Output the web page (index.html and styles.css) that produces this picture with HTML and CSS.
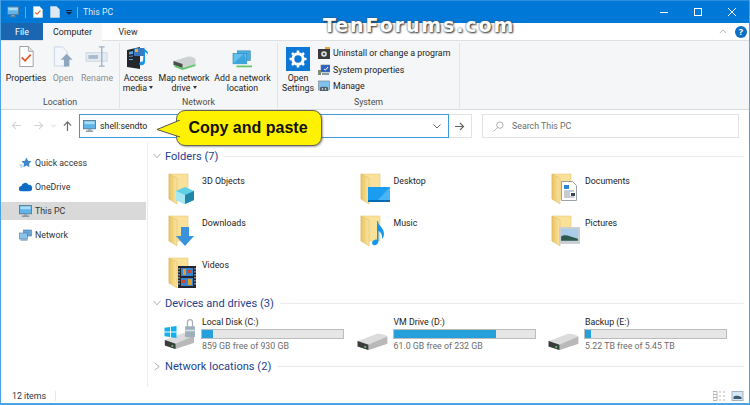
FILE: index.html
```html
<!DOCTYPE html>
<html lang="en">
<head>
<meta charset="utf-8">
<title>This PC</title>
<link rel="stylesheet" href="styles.css">
</head>
<body>
<svg class="defs" width="0" height="0" aria-hidden="true">
  <defs>
    <linearGradient id="fold" x1="0" y1="0" x2="1" y2="0"><stop offset="0" stop-color="#e9c260"/><stop offset="1" stop-color="#fbe6a2"/></linearGradient>
    <symbol id="folder" viewBox="0 0 32 32">
      <path d="M1 1h19v25H1z" fill="#fae19a" stroke="#e6c97e" stroke-width=".6"/>
      <path d="M1 1l8 4v26l-8-5z" fill="url(#fold)" stroke="#d9b760" stroke-width=".5"/>
    </symbol>
    <symbol id="pc" viewBox="0 0 14 13">
      <rect x=".5" y=".5" width="13" height="9" fill="#5fb5ea" stroke="#5a7d96"/>
      <rect x="1.5" y="1.5" width="11" height="3" fill="#a9dcf7"/>
      <rect x="5" y="10" width="4" height="1.5" fill="#8aa0ae"/>
      <rect x="3" y="11.5" width="8" height="1.2" fill="#6a8192"/>
    </symbol>
    <symbol id="hdd" viewBox="0 0 34 20">
      <path d="M1 9L22 1c4-.5 9 .5 12 3v8L13 19 1 15z" fill="#dcdcdc"/>
      <path d="M1 9l12 4 21-9v8L13 19 1 15z" fill="#b9b9b9"/>
      <path d="M1 9l12 4v6L1 15z" fill="#3b3b3b"/>
      <rect x="8.500" y="14.500" width="2" height="2" fill="#5fd06a"/>
    </symbol>
    <symbol id="sm-hdd" viewBox="0 0 24 16">
      <path d="M1 7L14 3c4-1 7 0 9 2v5l-13 4L1 11z" fill="#cfd2d2"/>
      <path d="M1 7l9 3v4l-9-3z" fill="#4d4d4d"/>
      <path d="M2 11l8 3 13-4v2l-13 4-8-3z" fill="#63c66a"/>
    </symbol>
  </defs>
</svg>

<div class="window">
  <header class="titlebar">
    <svg class="ti ti-pc"><use href="#pc"/></svg>
    <span class="tsep"></span>
    <svg class="ti ti-doc" viewBox="0 0 10 12"><path d="M.5.5h6l3 3v8h-9z" fill="#fff" stroke="#c9d6e2" stroke-width=".6"/><path d="M2.2 6.4l1.8 1.8 3.4-3.6" fill="none" stroke="#e8692c" stroke-width="1.2"/></svg>
    <svg class="ti ti-doc2" viewBox="0 0 10 12"><path d="M.5.5h6l3 3v8h-9z" fill="#dce9f5" stroke="#c2d6ea" stroke-width=".6"/></svg>
    <svg class="ti ti-drop" viewBox="0 0 6 6"><path d="M0 0h6v1H0zM0 2h6L3 5z" fill="#10253a"/></svg>
    <span class="tsep tsep2"></span>
    <span class="ttext">This PC</span>
    <span class="winbtns">
      <svg viewBox="0 0 10 10"><path d="M1 5.5h8" stroke="#fff" fill="none"/></svg>
      <svg viewBox="0 0 10 10"><rect x="1.5" y="1.5" width="7" height="7" stroke="#fff" fill="none"/></svg>
      <svg viewBox="0 0 10 10"><path d="M1 1l8 8M9 1l-8 8" stroke="#fff" fill="none"/></svg>
    </span>
  </header>
  <div class="watermark">TenForums.com</div>

  <nav class="tabs">
    <span class="tab tab-file">File</span>
    <span class="tab tab-active">Computer</span>
    <span class="tab tab-view">View</span>
    <span class="tabs-right">
      <svg class="chev" viewBox="0 0 10 6"><path d="M1 5l4-4 4 4" fill="none" stroke="#a6a6a6"/></svg>
      <span class="help">?</span>
    </span>
  </nav>

  <section class="ribbon">
    <div class="group g-location">
      <div class="group-body">
        <div class="rbtn w-prop">
          <svg class="ric" viewBox="0 0 20 22"><path d="M3.5.5h9l5 5v16h-14z" fill="#fff" stroke="#9d9d9d"/><path d="M12.5.5v5h5" fill="#e9e9e9" stroke="#9d9d9d"/><path d="M5.5 12l3.5 3.5 6-6.5" fill="none" stroke="#e4572a" stroke-width="1.8"/></svg>
          <span>Properties</span>
        </div>
        <div class="rbtn w-open dim">
          <svg class="ric" viewBox="0 0 22 22"><path d="M1.500.5h9l5 5v16h-14z" fill="#f3f7fb" stroke="#c4d3e2"/><path d="M15 8l6.500 6.500H18V22h-6v-7.500H8.500z" fill="#8fa6bd"/></svg>
          <span>Open</span>
        </div>
        <div class="rbtn w-rename dim">
          <svg class="ric ric-wide" viewBox="0 0 24 22"><rect x=".5" y="7" width="22" height="9" fill="#e4ecf3" stroke="#cdd8e2"/><rect x="3" y="9.500" width="10" height="4" fill="#a9bccd"/><path d="M14 1h6M17 1v20M14 21h6" fill="none" stroke="#9fb1c2" stroke-width="1.4"/></svg>
          <span>Rename</span>
        </div>
      </div>
      <div class="group-label">Location</div>
    </div>

    <div class="group g-network">
      <div class="group-body">
        <div class="rbtn w-access">
          <svg class="ric ric-media" viewBox="0 0 24 24"><path d="M1 4l13-3v22l-13-2z" fill="#23272c"/><path d="M3 6l4-1v3l-4 .6zM3 10l4-.6v1l-4 .4zM3 13h4v1H3z" fill="#5aa7e0"/><rect x="8" y="2" width="10" height="8" fill="#3b78c0"/><path d="M9 3h3v3H9z" fill="#e2b53f"/><path d="M18 1c.5 4 5 3 4 8-.5-2-2-2.500-3-3v10c0 2.500-3 4-5 3s0-4 3-3.500z" fill="#1596e8"/></svg>
          <span>Access<br>media <i class="caret"></i></span>
        </div>
        <div class="rbtn w-map">
          <svg class="ric ric-map" viewBox="0 0 24 16"><use href="#sm-hdd"/></svg>
          <span>Map network<br>drive <i class="caret"></i></span>
        </div>
        <div class="rbtn w-add">
          <svg class="ric ric-add" viewBox="0 0 24 22"><rect x="6" y="1" width="15" height="11" fill="#49b0e6" stroke="#2d7fae" stroke-width=".7"/><rect x="1" y="4" width="16" height="12" fill="#63c1ee" stroke="#2d7fae" stroke-width=".7"/><path d="M1 16h16l-3-12z" fill="#3da5dd"/><path d="M5 18h18v2H5z" fill="#62c566"/></svg>
          <span>Add a network<br>location</span>
        </div>
      </div>
      <div class="group-label">Network</div>
    </div>

    <div class="group g-system">
      <div class="group-body">
        <div class="rbtn w-settings">
          <svg class="ric ric-gear" viewBox="0 0 24 24"><rect width="24" height="24" fill="#0a78d4"/><circle cx="12" cy="12" r="5.200" fill="none" stroke="#fff" stroke-width="3"/><path d="M12 3.500v3M12 17.500v3M3.500 12h3M17.500 12h3M6 6l2.200 2.200M15.800 15.800L18 18M18 6l-2.200 2.200M8.200 15.800L6 18" stroke="#fff" stroke-width="2.600"/></svg>
          <span>Open<br>Settings</span>
        </div>
        <ul class="syslist">
          <li><svg viewBox="0 0 12 12"><rect y="2" width="12" height="10" fill="#3a3a3a"/><circle cx="6" cy="7" r="2.800" fill="#e8e8e8"/><circle cx="6" cy="7" r="1.300" fill="#555"/><path d="M7 0h5v2H7z" fill="#e8a33d"/></svg>Uninstall or change a program</li>
          <li><svg viewBox="0 0 12 12"><rect x="3" y="1" width="9" height="7" fill="#2f5fc0" stroke="#6a7a8a" stroke-width=".6"/><path d="M6 5l1.500 1L10 3" stroke="#fff" fill="none"/><rect x="0" y="6" width="3" height="5" fill="#7c8c74"/><rect x="4" y="9" width="7" height="2" fill="#8a9aa6"/></svg>System properties</li>
          <li><svg viewBox="0 0 12 12"><rect x=".5" y="1" width="11" height="9" fill="#7ec3ee" stroke="#7d8c98" stroke-width=".7"/><path d="M2 11V7.500c0-1 8-1 8 0V11z" fill="#555f68"/><circle cx="4.500" cy="9" r=".8" fill="#fff"/><circle cx="7.500" cy="9" r=".8" fill="#fff"/></svg>Manage</li>
        </ul>
      </div>
      <div class="group-label">System</div>
    </div>
  </section>

  <div class="addressbar">
    <svg class="nav nav-back" viewBox="0 0 12 10"><path d="M11 5H1.500M5.500 1l-4 4 4 4" fill="none" stroke="#cfd3d6" stroke-width="1.200"/></svg>
    <svg class="nav nav-fwd" viewBox="0 0 12 10"><path d="M1 5h9.500M6.500 1l4 4-4 4" fill="none" stroke="#cfd3d6" stroke-width="1.200"/></svg>
    <svg class="nav nav-down" viewBox="0 0 6 4"><path d="M.5.500L3 3 5.500.5" fill="none" stroke="#c9ccce"/></svg>
    <svg class="nav nav-up" viewBox="0 0 10 11"><path d="M5 11V1.500M1 5l4-4 4 4" fill="none" stroke="#6a6a6a" stroke-width="1.300"/></svg>
    <div class="addr">
      <svg class="addr-pc"><use href="#pc"/></svg>
      <span class="addr-text">shell:sendto</span>
      <svg class="addr-chev" viewBox="0 0 8 5"><path d="M.5.500L4 4 7.500.5" fill="none" stroke="#666"/></svg>
    </div>
    <div class="go"><svg viewBox="0 0 10 9"><path d="M0 4.500h8.500M5 1l3.500 3.500L5 8" fill="none" stroke="#666" stroke-width="1.200"/></svg></div>
    <div class="search">
      <svg viewBox="0 0 12 12"><circle cx="7.500" cy="4.500" r="3.500" fill="none" stroke="#a8a8a8"/><path d="M5 7L1 11" stroke="#a8a8a8"/></svg>
      <span>Search This PC</span>
    </div>
  </div>

  <div class="callout">
    <svg class="callout-tail" viewBox="0 0 24 18"><path d="M24 0L1 9.500 24 17" fill="#fff200" stroke="#55554a" stroke-linejoin="round"/></svg>
    <span class="callout-body">Copy and paste</span>
  </div>

  <main class="main">
    <aside class="side">
      <div class="side-item"><svg viewBox="0 0 12 12"><path d="M7 .5l1.600 3.300 3.400.5-2.500 2.400.6 3.500L7 8.600 3.900 10.200l.6-3.500L2 4.300l3.400-.5z" fill="#3f87c9"/><path d="M0 8h3M1 10h2" stroke="#7fb1dc"/></svg>Quick access</div>
      <div class="side-item"><svg viewBox="0 0 12 8"><path d="M2.500 8a2.500 2.500 0 0 1-.3-5A3.500 3.500 0 0 1 8.700 2 3 3 0 0 1 9.500 8z" fill="#0f6cc4"/></svg>OneDrive</div>
      <div class="side-item sel"><svg><use href="#pc"/></svg>This PC</div>
      <div class="side-item"><svg viewBox="0 0 12 12"><rect x="4" y="1" width="8" height="6" fill="#6aa6d6" stroke="#4a7aa8" stroke-width=".6"/><rect x="0" y="4" width="8" height="6" fill="#8cc3ea" stroke="#4a7aa8" stroke-width=".6"/><path d="M1 11h7" stroke="#5b7f9f"/></svg>Network</div>
    </aside>

    <div class="content">
      <div class="sec-head"><svg viewBox="0 0 9 6"><path d="M.5.500L4.500 5 8.500.5" fill="none" stroke="#8a8a8a" stroke-width=".8"/></svg><span>Folders (7)</span><i></i></div>
      <div class="grid folders">
        <div class="fitem"><span class="fic"><svg class="f"><use href="#folder"/></svg><svg class="o" viewBox="0 0 20 20"><path d="M10 2l9 4v9l-9 4-9-4V6z" fill="#5ed0e6"/><path d="M10 10v9l-9-4V6z" fill="#a5e8f3"/><path d="M10 10v9l9-4V6z" fill="#1f86a8"/></svg></span>3D Objects</div>
        <div class="fitem"><span class="fic"><svg class="f"><use href="#folder"/></svg><svg class="o o-desk" viewBox="0 0 22 15"><rect width="22" height="15" fill="#1a9cf0"/><path d="M22 0v15H8z" fill="#47b5f7"/><rect y="13" width="22" height="2" fill="#0a6bb0"/></svg></span>Desktop</div>
        <div class="fitem"><span class="fic"><svg class="f"><use href="#folder"/></svg><svg class="o o-doc" viewBox="0 0 16 20"><path d="M.5.500h11l4 4v15H.5z" fill="#fff" stroke="#9aa2a8"/><path d="M3 4h5v4H3z" fill="#2f86d6"/><path d="M3 10h10M3 12h6M3 14h6M3 16h10" stroke="#8c98a2"/><path d="M10 12h4v3h-4z" fill="#3a4a55"/></svg></span>Documents</div>
        <div class="fitem"><span class="fic"><svg class="f"><use href="#folder"/></svg><svg class="o" viewBox="0 0 20 20"><path d="M6 0h8v9h5l-9 10-9-10h5z" fill="#3a92dc"/></svg></span>Downloads</div>
        <div class="fitem"><span class="fic"><svg class="f"><use href="#folder"/></svg><svg class="o o-note" viewBox="0 0 14 26"><path d="M7 1c0 5 6 6 6 13 0 2-1 4-2 5 .5-4-1-7-3.500-8V21c0 3-3 5-5 4s-2-4 1-5 2.500 0 2.500 0V1z" fill="#1598ec"/></svg></span>Music</div>
        <div class="fitem"><span class="fic"><svg class="f"><use href="#folder"/></svg><svg class="o o-pic" viewBox="0 0 20 16"><rect width="20" height="16" fill="#c9ced2"/><rect x="2" y="2" width="16" height="11" fill="#a9cdea"/><path d="M2 9c4-3 8 0 16 2v2H2z" fill="#2c5a4e"/></svg></span>Pictures</div>
        <div class="fitem"><span class="fic"><svg class="f"><use href="#folder"/></svg><svg class="o o-vid" viewBox="0 0 18 22"><rect width="18" height="22" fill="#23272c"/><rect x="3" y="2" width="12" height="8" fill="#3b83d2"/><rect x="3" y="12" width="12" height="8" fill="#3b83d2"/><path d="M5 3h3v6H5zM10 13h4v6h-4z" fill="#d8a22d"/><path d="M9 4h4v3H9zM4 14h4v3H4z" fill="#c44a33"/><path d="M1 2v18M17 2v18" stroke="#ddd" stroke-dasharray="1.500 1.500"/></svg></span>Videos</div>
      </div>

      <div class="sec-head"><svg viewBox="0 0 9 6"><path d="M.5.500L4.500 5 8.500.5" fill="none" stroke="#8a8a8a" stroke-width=".8"/></svg><span>Devices and drives (3)</span><i></i></div>
      <div class="grid drives">
        <div class="drive">
          <span class="dic dic-c"><svg class="hd"><use href="#hdd"/></svg>
            <svg class="lock" viewBox="0 0 12 24"><path d="M3 11V5a3 3 0 0 1 6 0v6" fill="none" stroke="#a9b2b8" stroke-width="1.600"/><rect x="0" y="10" width="12" height="13" rx="1" fill="#9eb0bd"/><rect x="0" y="14" width="12" height="2" fill="#d8dfe4"/></svg>
            <svg class="win" viewBox="0 0 13 13"><path d="M0 2l6-1v5H0zM7 .8l6-.8v6H7zM0 7h6v5l-6-1zM7 7h6v6l-6-.8z" fill="#11b0ee"/></svg></span>
          <div class="dinfo"><div class="dname">Local Disk (C:)</div><div class="bar"><b class="fill" style="width:8%"></b></div><div class="dfree">859 GB free of 930 GB</div></div>
        </div>
        <div class="drive">
          <span class="dic"><svg class="hd"><use href="#hdd"/></svg></span>
          <div class="dinfo"><div class="dname">VM Drive (D:)</div><div class="bar"><b class="fill" style="width:73%"></b></div><div class="dfree">61.0 GB free of 232 GB</div></div>
        </div>
        <div class="drive">
          <span class="dic"><svg class="hd"><use href="#hdd"/></svg></span>
          <div class="dinfo"><div class="dname">Backup (E:)</div><div class="bar"><b class="fill" style="width:4%"></b></div><div class="dfree">5.22 TB free of 5.45 TB</div></div>
        </div>
      </div>

      <div class="sec-head sec-net"><svg viewBox="0 0 9 9"><path d="M2 .5L7 4.500 2 8.500" fill="none" stroke="#8a8a8a" stroke-width=".8"/></svg><span>Network locations (2)</span><i></i></div>
    </div>
  </main>

  <footer class="status">
    <span>12 items</span>
    <span class="status-sep"></span>
    <span class="views">
      <svg viewBox="0 0 13 10"><path d="M0 .5h4M0 3.500h4M0 6.500h4M0 9.500h4M6 1h2M10 1h2M6 5h2M10 5h2M6 9h2M10 9h2M0 .5v9M4 .5v9" stroke="#b5b5b5" fill="none"/></svg>
      <svg viewBox="0 0 12 10"><rect x=".5" y=".5" width="11" height="9" fill="#d6e6f3" stroke="#9fb3c4"/><path d="M2 6c2-2 5-1 8 0v2H2z" fill="#3a5f75"/></svg>
    </span>
  </footer>
</div>
</body>
</html>
```

FILE: styles.css
```css
* { box-sizing: border-box; }
html, body { margin: 0; padding: 0; }
body {
  width: 750px;
  height: 405px;
  overflow: hidden;
  background: #fff;
  font-family: Roboto, "Noto Sans", sans-serif;
  font-size: 8.8px;
  color: #1c1c1c;
}
.defs { position: absolute; }

.window {
  position: relative;
  width: 750px;
  height: 405px;
  border: solid #4ba3e3;
  border-width: 0 1px 2px 1px;
  display: flex;
  flex-direction: column;
  overflow: hidden;
}

/* title bar */
.titlebar {
  height: 23px;
  margin: 0 -1px;
  padding-left: 7px;
  background: #0078d7;
  display: flex;
  align-items: center;
  flex: none;
  border-top: 1px solid #2a8fdf;
}
.ti { display: block; flex: none; }
.ti-pc { width: 12px; height: 12px; margin-right: 6px; }
.tsep { width: 1px; height: 11px; background: #63aee8; margin-right: 7px; }
.ti-doc { width: 10px; height: 12px; margin-right: 7px; }
.ti-doc2 { width: 10px; height: 12px; margin-right: 6px; }
.ti-drop { width: 6px; height: 6px; margin: 2px 5px 0 0; }
.tsep2 { margin-right: 5px; }
.ttext { color: #dcebf8; }
.winbtns { margin-left: auto; display: flex; gap: 24px; padding-right: 13px; }
.winbtns svg { width: 10px; height: 10px; display: block; }

.watermark {
  position: absolute;
  left: 322px;
  top: 14px;
  font-family: "DejaVu Sans", sans-serif;
  font-weight: 700;
  font-size: 19px;
  line-height: 22px;
  letter-spacing: 1.9px;
  color: #fff;
  text-shadow: 1px 1px 2px #333, 0 0 2px #555;
}

/* tabs */
.tabs {
  height: 18px;
  flex: none;
  display: flex;
  align-items: stretch;
  background: #fff;
  border-bottom: 1px solid #dfe0e1;
}
.tab { display: flex; align-items: center; justify-content: center; }
.tab-file { width: 42px; background: #1a66b0; color: #fff; }
.tab-active { width: 59px; background: #f5f6f7; margin-bottom: -1px; position: relative; }
.tab-view { width: 52px; color: #2b2b2b; }
.tabs-right { margin-left: auto; display: flex; align-items: center; gap: 8px; padding-right: 2px; }
.chev { width: 8px; height: 5px; display: block; }
.help {
  width: 12px;
  height: 12px;
  border-radius: 50%;
  background: #0b6fc2;
  color: #fff;
  font: 700 9px/12px "Noto Sans", sans-serif;
  text-align: center;
}

/* ribbon */
.ribbon {
  height: 69px;
  flex: none;
  background: #f5f6f7;
  display: flex;
  border-bottom: 1px solid #dadbdc;
}
.group {
  display: flex;
  flex-direction: column;
  border-right: 1px solid #e2e3e4;
  margin: 2px 0 1px;
}
.g-location { width: 119px; }
.g-network { width: 158px; }
.g-system { width: 182px; }
.group-body { flex: 1; display: flex; padding-top: 3px; }
.group-label { height: 12px; line-height: 12px; text-align: center; color: #4c4c4c; }
.rbtn {
  display: flex;
  flex-direction: column;
  align-items: center;
  text-align: center;
  line-height: 10px;
  white-space: nowrap;
  flex: none;
}
.ric { display: block; width: 20px; height: 21px; margin-bottom: 6px; }
.w-prop { width: 44px; margin-left: 3px; }
.w-open { width: 30px; }
.w-rename { width: 38px; }
.dim { color: #8c8c8c; }
.ric-wide { width: 24px; }
.w-access { width: 40px; margin-left: -2px; }
.w-map { width: 52px; }
.w-add { width: 63px; margin-left: 1px; }
.ric-media { width: 24px; height: 24px; margin-bottom: 3px; }
.ric-map { width: 25px; height: 16px; margin: 8px 0 3px; }
.ric-add { width: 23px; height: 19px; margin: 4px 0 4px; }
.caret {
  display: inline-block;
  width: 0;
  height: 0;
  border: 2px solid transparent;
  border-top: 3px solid #333;
  border-bottom: 0;
  vertical-align: 2px;
}
.w-settings { width: 36px; margin-left: 2px; }
.ric-gear { width: 24px; height: 24px; margin: 1px 0 2px; }
.syslist { list-style: none; margin: -1px 0 0 2px; padding: 0; }
.syslist li { height: 16.500px; display: flex; align-items: center; white-space: nowrap; }
.syslist svg { width: 12px; height: 12px; margin-right: 3px; flex: none; }

/* address bar */
.addressbar {
  height: 33px;
  flex: none;
  padding: 4px 9px 0 0;
  display: flex;
  align-items: flex-start;
  background: #fff;
}
.nav { display: block; flex: none; }
.nav-back { width: 11px; height: 9px; margin: 7px 0 0 10px; }
.nav-fwd { width: 11px; height: 9px; margin: 7px 0 0 11px; }
.nav-down { width: 5px; height: 4px; margin: 10px 0 0 7px; }
.nav-up { width: 9px; height: 10px; margin: 7px 0 0 7px; }
.addr {
  width: 370px;
  height: 24px;
  margin-left: 7px;
  border: 1px solid #3e99dc;
  display: flex;
  align-items: center;
  padding: 0 7px 0 3px;
}
.addr-pc { width: 13px; height: 12px; margin-right: 4px; flex: none; }
.addr-chev { width: 8px; height: 5px; margin-left: auto; }
.go {
  width: 23px;
  height: 24px;
  border: 1px solid #e2e3e4;
  border-left: 0;
  display: flex;
  align-items: center;
  justify-content: center;
}
.go svg { width: 10px; height: 9px; }
.search {
  width: 257px;
  height: 24px;
  margin-left: 10px;
  border: 1px solid #e2e3e4;
  display: flex;
  align-items: center;
  padding-left: 10px;
  color: #6d6d6d;
}
.search svg { width: 11px; height: 11px; margin-right: 8px; }

/* callout */
.callout {
  position: absolute;
  left: 155px;
  top: 110px;
  height: 36px;
  display: flex;
  align-items: center;
}
.callout-tail { width: 24px; height: 18px; margin-right: -4px; position: relative; z-index: 1; margin-top: 2px; }
.callout-body {
  width: 146px;
  height: 36px;
  padding-right: 2px;
  background: #fff200;
  border: 1px solid #66664f;
  border-radius: 9px;
  box-shadow: 1px 1px 2px rgba(0,0,0,.35);
  font: 700 16px/34px "Liberation Sans", sans-serif;
  color: #111;
  text-align: center;
}

/* main */
.main { flex: 1; display: flex; min-height: 0; }
.side {
  width: 147px;
  flex: none;
  border-right: 1px solid #ededed;
  padding-top: 8px;
  margin-bottom: 1px;
  color: #333;
}
.side-item {
  height: 24px;
  display: flex;
  align-items: center;
  padding-left: 18px;
  width: 145px;
}
.side-item svg { width: 13px; height: 12px; margin-right: 3px; flex: none; }
.sel { background: #d9d9d9; height: 18px; margin: 3px 0; }

.content { flex: 1; padding: 6px 5px 0; min-width: 0; }
.sec-head { height: 14px; display: flex; align-items: center; font-size: 11.100px; }
.sec-head svg { width: 8px; height: 6px; margin-right: 4px; flex: none; }
.sec-net svg { height: 9px; }
.sec-head span { white-space: nowrap; color: #25418f; }
.sec-head i { flex: 1; height: 1px; background: #ebebeb; margin-left: 6px; }
.sec-net { margin-top: 1px; }

.grid { display: grid; grid-template-columns: repeat(3, 191.500px); }
.folders { grid-template-rows: 42px 42px 38px; padding-top: 11px; }
.fitem { display: flex; align-items: flex-start; padding-left: 15px; line-height: 14px; color: #222; }
.fic { position: relative; width: 32px; height: 32px; margin-right: 2px; flex: none; display: block; top: -1px; }
.fic .f { width: 32px; height: 32px; position: absolute; left: 0; top: 0; }
.fic .o { width: 20px; height: 20px; position: absolute; left: 7px; top: 12px; }
.fic .o-desk { width: 22px; height: 15px; left: 8px; top: 14px; }
.fic .o-doc { width: 16px; height: 20px; left: 10px; top: 8px; }
.fic .o-note { width: 14px; height: 26px; left: 11px; top: 5px; }
.fic .o-pic { width: 21px; height: 17px; left: 8px; top: 12px; }
.fic .o-vid { width: 18px; height: 22px; left: 10px; top: 9px; }

.drives { padding-top: 6px; }
.drive { display: flex; padding-left: 10px; height: 42px; }
.dic { position: relative; width: 34px; height: 36px; flex: none; display: block; margin-right: 4px; }
.dic .hd { position: absolute; left: 1px; top: 17px; width: 32px; height: 18px; }
.dic-c .lock { position: absolute; left: 21px; top: 2px; width: 12px; height: 20px; }
.dic-c .win { position: absolute; left: 1px; top: 10px; width: 13px; height: 12px; }
.dic-c .hd { left: 1px; top: 16px; width: 30px; height: 18px; }
.dinfo { width: 143px; }
.dname { height: 13px; line-height: 13px; padding-left: 1px; color: #222; }
.bar { height: 10px; background: #e6e6e6; border: 1px solid #bcbcbc; }
.fill { display: block; height: 100%; background: #26a0da; }
.dfree { color: #6d6d6d; line-height: 14px; padding-left: 1px; }

/* status */
.status {
  height: 15px;
  flex: none;
  display: flex;
  align-items: center;
  padding-left: 11px;
  color: #333;
}
.status-sep { width: 1px; height: 10px; background: #e6e6e6; margin-left: 9px; }
.views { margin-left: auto; display: flex; gap: 5px; padding-right: 5px; }
.views svg { width: 13px; height: 10px; display: block; }
```
